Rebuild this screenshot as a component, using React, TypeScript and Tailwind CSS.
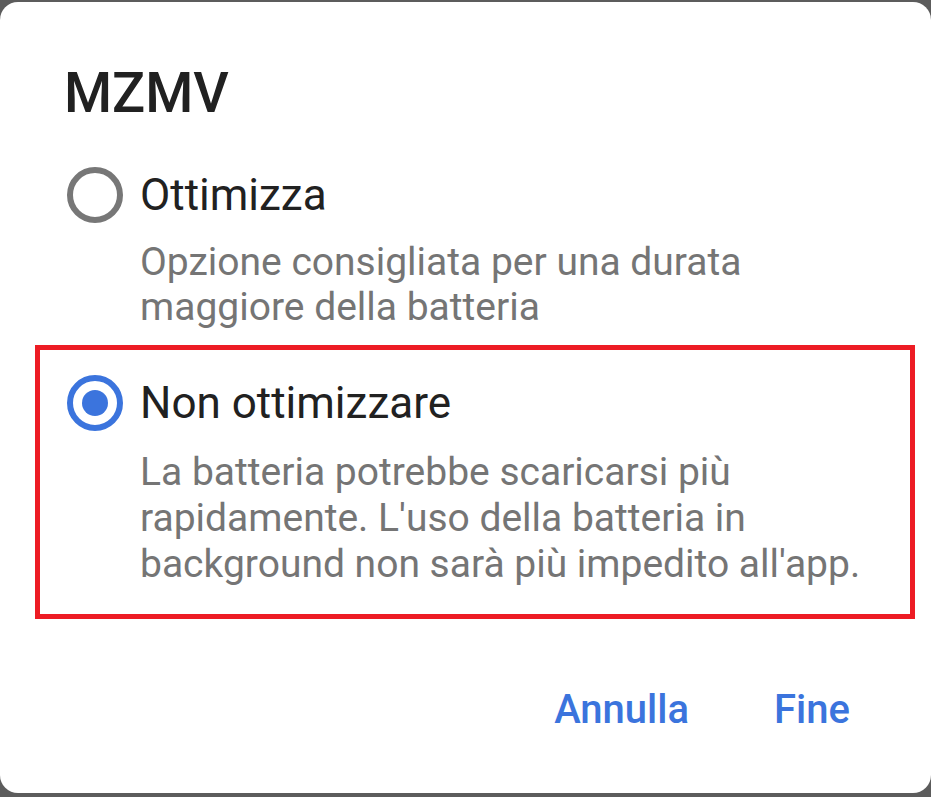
import React from "react";

function Radio({ checked }: { checked: boolean }) {
  return (
    <div
      className={
        "w-[56px] h-[56px] rounded-full border-[6px] flex items-center justify-center shrink-0 " +
        (checked ? "border-[#3b74dd]" : "border-[#777777]")
      }
    >
      {checked && <div className="w-[26px] h-[26px] rounded-full bg-[#3b74dd]" />}
    </div>
  );
}

export default function App() {
  return (
    <div
      className="w-[931px] h-[797px] bg-[#5c5c5c] pt-[2px] pb-[4px] overflow-hidden"
      style={{ fontFamily: "Roboto, 'Noto Sans', sans-serif" }}
    >
      <div className="bg-white rounded-[18px] h-full flex flex-col">
        <div className="pl-[64px] pt-[59px] text-[55px] leading-[64px] font-medium text-[#212121]">
          MZMV
        </div>

        <div className="mt-[42px] pl-[67px] flex items-center gap-[17px]">
          <Radio checked={false} />
          <span className="text-[44px] leading-[56px] text-[#212121]">Ottimizza</span>
        </div>
        <div className="mt-[17px] pl-[140px] text-[39px] leading-[45px] text-[#757575]">
          Opzione consigliata per una durata
          <br />
          maggiore della batteria
        </div>

        <div className="mt-[15px] ml-[35px] w-[880px] border-[5px] border-[#ed1c24] pt-[25px] pb-[27px]">
          <div className="pl-[27px] flex items-center gap-[17px]">
            <Radio checked={true} />
            <span className="text-[44px] leading-[56px] text-[#212121]">Non ottimizzare</span>
          </div>
          <div className="mt-[18px] pl-[100px] text-[39px] leading-[46px] text-[#757575]">
            La batteria potrebbe scaricarsi più
            <br />
            rapidamente. L'uso della batteria in
            <br />
            background non sarà più impedito all'app.
          </div>
        </div>

        <div className="mt-[67px] flex justify-end items-center gap-[85px] pr-[81px] text-[40px] leading-[48px] font-medium text-[#3b74dd]">
          <span>Annulla</span>
          <span>Fine</span>
        </div>
      </div>
    </div>
  );
}
